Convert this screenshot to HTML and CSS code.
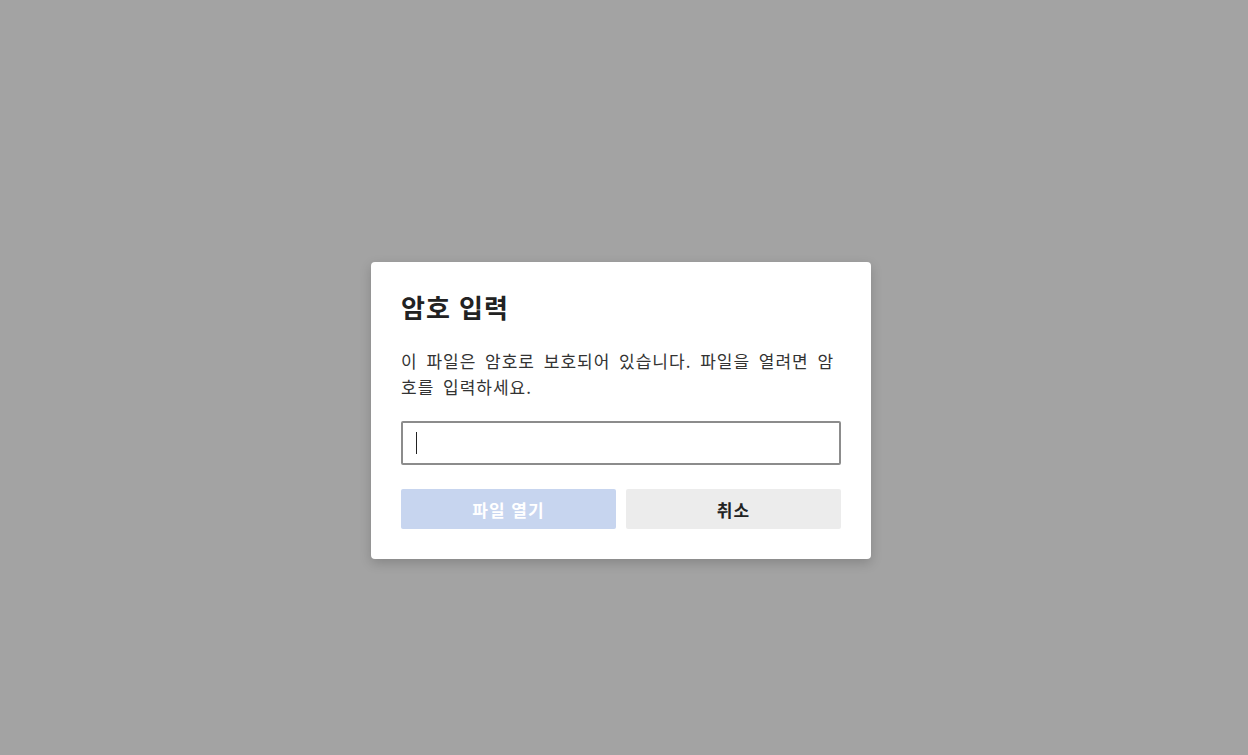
FILE: index.html
```html
<!DOCTYPE html>
<html lang="ko">
<head>
<meta charset="utf-8">
<title>암호 입력</title>
<link rel="stylesheet" href="styles.css">
</head>
<body>
<div class="overlay">
  <div class="dialog">
    <h2 class="title">암호 입력</h2>
    <p class="message">이 파일은 암호로 보호되어 있습니다. 파일을 열려면 암호를 입력하세요.</p>
    <div class="field"><span class="caret"></span></div>
    <div class="actions">
      <button class="btn btn-primary" disabled>파일 열기</button>
      <button class="btn btn-secondary">취소</button>
    </div>
  </div>
</div>
</body>
</html>
```
FILE: styles.css
```css
* { box-sizing: border-box; }
html, body { margin: 0; padding: 0; }
body {
  background: #a3a3a3;
  font-family: "Noto Sans CJK KR", "Noto Sans", sans-serif;
  color: #333;
}
.overlay {
  min-height: 100vh;
  display: flex;
  justify-content: center;
  align-items: flex-start;
  padding-top: 262px;
  padding-right: 6px;
}
.dialog {
  width: 500px;
  background: #fff;
  border-radius: 4px;
  padding: 30px;
  box-shadow: 0 4px 12px rgba(0,0,0,0.18);
}
.title {
  margin: 0 0 26px;
  font-size: 26px;
  line-height: 30px;
  letter-spacing: 1px;
  font-weight: 700;
  color: #222;
}
.message {
  margin: 0 0 21px;
  font-size: 17px;
  line-height: 26px;
  letter-spacing: 1px;
  word-spacing: 3px;
  color: #333;
  word-break: break-all;
}
.field {
  height: 44px;
  border: 2px solid #8c8c8c;
  border-radius: 2px;
  display: flex;
  align-items: center;
  padding-left: 13px;
}
.caret {
  width: 1px;
  height: 22px;
  background: #222;
}
.actions {
  margin-top: 24px;
  display: flex;
  gap: 10px;
}
.btn {
  flex: 1;
  height: 40px;
  border: none;
  border-radius: 2px;
  font-family: inherit;
  font-size: 17px;
  letter-spacing: 1px;
  font-weight: 700;
}
.btn-primary {
  background: #c7d5ef;
  color: #fff;
}
.btn-secondary {
  background: #ececec;
  color: #222;
}
```
